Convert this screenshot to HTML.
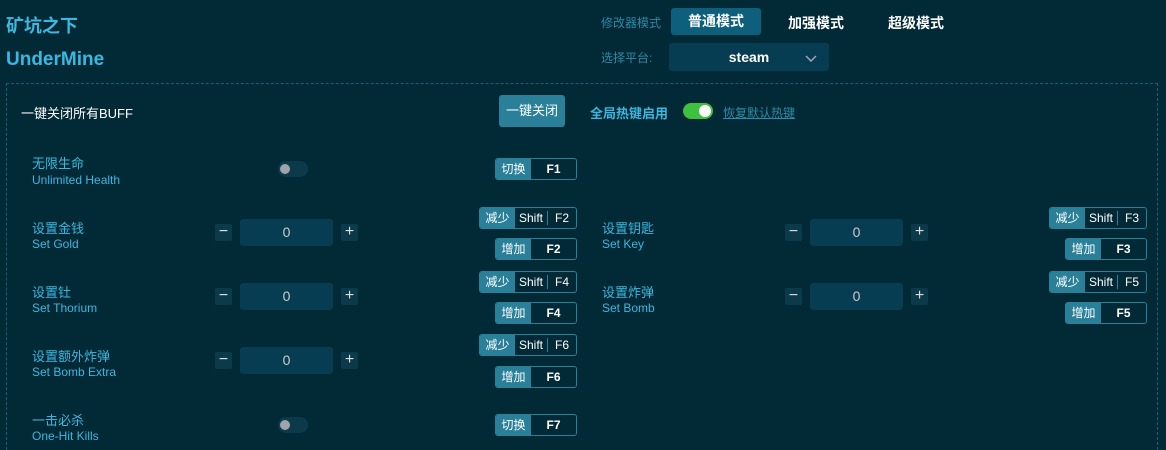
<!DOCTYPE html>
<html style="width:1166px;height:450px;overflow:hidden"><head><meta charset="utf-8"><style>
*{margin:0;padding:0;box-sizing:border-box}
body{width:1166px;height:450px;background:#022936;font-family:"Liberation Sans","Noto Sans CJK SC",sans-serif;position:relative;overflow:hidden;color:#fff}
.a{position:absolute;white-space:nowrap}
.cn{font-size:13px;color:#3cb8e0}
.en{font-size:12px;color:#3cb8e0}
.hk{position:absolute;height:22px;border:1px solid #2a7f99;border-radius:3px;display:flex;font-size:12px;color:#fff;overflow:hidden;line-height:20px}
.hk .l{background:#2a7f99;width:35px;text-align:center;flex:none}
.hk .k{flex:1;text-align:center;font-weight:bold}
.hk .s{width:33px;text-align:center;border-right:1px solid #2a7f99;margin:3px 0;line-height:14px}
.hk .f{flex:1;text-align:center}
.btn{position:absolute;width:17px;height:17px;background:#0b3a4a;border-radius:2px;color:#ddd;font-size:16px;line-height:16px;text-align:center}
.inp{position:absolute;width:93px;height:27px;background:#073d52;border-radius:3px;color:#ccc;font-size:14px;text-align:center;line-height:27px}
.tog{position:absolute;width:30px;height:16px;background:#0b3a4a;border-radius:8px}
.tog:after{content:"";position:absolute;left:2px;top:3px;width:10px;height:10px;border-radius:50%;background:#a0a4a8}
</style></head><body>
<div class="a" style="left:6px;top:12px;font-size:18px;font-weight:bold;color:#3cb8e0">矿坑之下</div>
<div class="a" style="left:6px;top:49px;font-size:19px;font-weight:bold;color:#3cb8e0">UnderMine</div>
<div class="a" style="left:601px;top:14px;font-size:12px;color:#2f8aa6">修改器模式</div>
<div class="a" style="left:671px;top:8px;width:90px;height:27px;background:#0e5f7c;border-radius:3px;text-align:center;line-height:27px;font-size:14px;font-weight:bold">普通模式</div>
<div class="a" style="left:788px;top:13px;font-size:14px;font-weight:bold">加强模式</div>
<div class="a" style="left:888px;top:13px;font-size:14px;font-weight:bold">超级模式</div>
<div class="a" style="left:601px;top:49px;font-size:12px;color:#2f8aa6">选择平台:</div>
<div class="a" style="left:669px;top:43px;width:160px;height:28px;background:#073d52;border-radius:3px;text-align:center;line-height:28px;font-size:14px;font-weight:bold">steam</div>
<svg class="a" style="left:805px;top:55px" width="12" height="8"><path d="M1 1 L6 6 L11 1" stroke="#aab" stroke-width="1.4" fill="none"/></svg>
<div class="a" style="left:6px;top:83px;width:1152px;height:367px;border:1px dashed #1e5f73;border-bottom:none"></div>
<div class="a" style="left:21px;top:103px;font-size:13px">一键关闭所有BUFF</div>
<div class="a" style="left:499px;top:95px;width:66px;height:32px;background:#2a7f99;border-radius:3px;text-align:center;line-height:32px;font-size:13px">一键关闭</div>
<div class="a" style="left:590px;top:103px;font-size:13px;font-weight:bold;color:#3cb8e0">全局热键启用</div>
<div class="a" style="left:683px;top:103px;width:30px;height:16px;background:#3ec13e;border-radius:8px"><div style="position:absolute;right:2px;top:2px;width:12px;height:12px;border-radius:50%;background:#fff"></div></div>
<div class="a" style="left:723px;top:104px;font-size:12px;color:#2f8aa6;text-decoration:underline">恢复默认热键</div>

<div class="a cn" style="left:32px;top:153px">无限生命</div>
<div class="a en" style="left:32px;top:173px">Unlimited Health</div>
<div class="tog" style="left:278px;top:161px"></div>
<div class="hk" style="left:495px;top:158px;width:82px"><div class="l">切换</div><div class="k">F1</div></div>

<div class="a cn" style="left:32px;top:218px">设置金钱</div>
<div class="a en" style="left:32px;top:237px">Set Gold</div>
<div class="btn" style="left:215px;top:224px">−</div><div class="inp" style="left:240px;top:219px">0</div><div class="btn" style="left:341px;top:224px">+</div>
<div class="hk" style="left:479px;top:207px;width:98px"><div class="l">减少</div><div class="s">Shift</div><div class="f">F2</div></div>
<div class="hk" style="left:495px;top:238px;width:82px"><div class="l">增加</div><div class="k">F2</div></div>

<div class="a cn" style="left:602px;top:218px">设置钥匙</div>
<div class="a en" style="left:602px;top:237px">Set Key</div>
<div class="btn" style="left:785px;top:224px">−</div><div class="inp" style="left:810px;top:219px">0</div><div class="btn" style="left:911px;top:224px">+</div>
<div class="hk" style="left:1049px;top:207px;width:98px"><div class="l">减少</div><div class="s">Shift</div><div class="f">F3</div></div>
<div class="hk" style="left:1065px;top:238px;width:82px"><div class="l">增加</div><div class="k">F3</div></div>

<div class="a cn" style="left:32px;top:282px">设置钍</div>
<div class="a en" style="left:32px;top:301px">Set Thorium</div>
<div class="btn" style="left:215px;top:288px">−</div><div class="inp" style="left:240px;top:283px">0</div><div class="btn" style="left:341px;top:288px">+</div>
<div class="hk" style="left:479px;top:271px;width:98px"><div class="l">减少</div><div class="s">Shift</div><div class="f">F4</div></div>
<div class="hk" style="left:495px;top:302px;width:82px"><div class="l">增加</div><div class="k">F4</div></div>

<div class="a cn" style="left:602px;top:282px">设置炸弹</div>
<div class="a en" style="left:602px;top:301px">Set Bomb</div>
<div class="btn" style="left:785px;top:288px">−</div><div class="inp" style="left:810px;top:283px">0</div><div class="btn" style="left:911px;top:288px">+</div>
<div class="hk" style="left:1049px;top:271px;width:98px"><div class="l">减少</div><div class="s">Shift</div><div class="f">F5</div></div>
<div class="hk" style="left:1065px;top:302px;width:82px"><div class="l">增加</div><div class="k">F5</div></div>

<div class="a cn" style="left:32px;top:346px">设置额外炸弹</div>
<div class="a en" style="left:32px;top:365px">Set Bomb Extra</div>
<div class="btn" style="left:215px;top:352px">−</div><div class="inp" style="left:240px;top:347px">0</div><div class="btn" style="left:341px;top:352px">+</div>
<div class="hk" style="left:479px;top:334px;width:98px"><div class="l">减少</div><div class="s">Shift</div><div class="f">F6</div></div>
<div class="hk" style="left:495px;top:366px;width:82px"><div class="l">增加</div><div class="k">F6</div></div>

<div class="a cn" style="left:32px;top:410px">一击必杀</div>
<div class="a en" style="left:32px;top:429px">One-Hit Kills</div>
<div class="tog" style="left:278px;top:417px"></div>
<div class="hk" style="left:495px;top:414px;width:82px"><div class="l">切换</div><div class="k">F7</div></div>
</body></html>
